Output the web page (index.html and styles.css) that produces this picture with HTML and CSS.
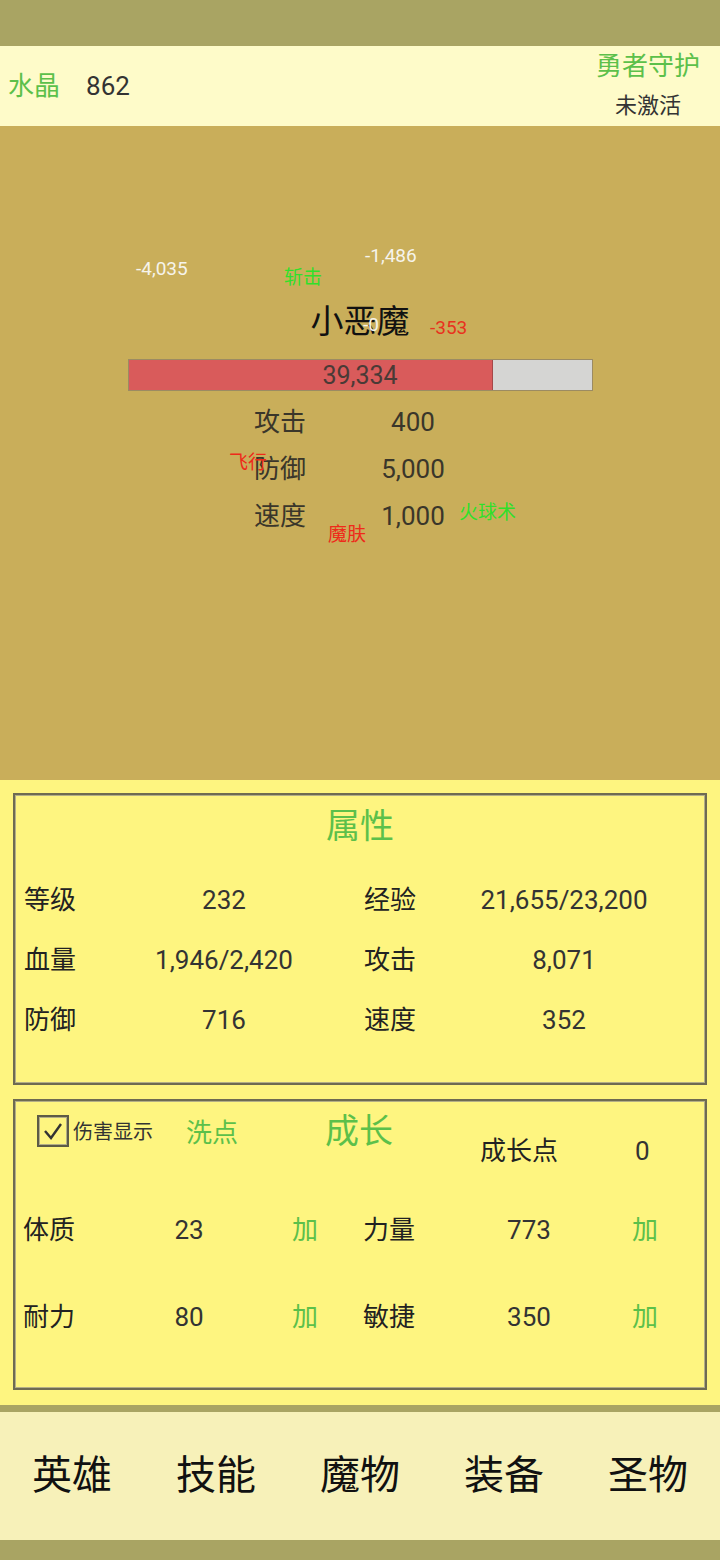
FILE: index.html
```html
<!DOCTYPE html>
<html lang="zh-CN">
<head>
  <meta charset="UTF-8" />
  <meta name="viewport" content="width=device-width, initial-scale=1.0"/>
  <title>勇者</title>
  <link rel="stylesheet" href="styles.css">
</head>
<body>
<div class="status-bar"></div>

<header class="top">
  <div class="crystal">
    <span class="crystal-label">水晶</span>
    <span class="crystal-num">862</span>
  </div>
  <div class="guard">
    <div class="guard-title">勇者守护</div>
    <div class="guard-state">未激活</div>
  </div>
</header>

<section class="battle">
  <div class="monster-name">小恶魔</div>
  <div class="hp-bar">
    <div class="hp-fill" style="width: 78.7%"></div>
    <span class="hp-text">39,334</span>
  </div>
  <div class="monster-stats">
    <span class="m-label">攻击</span><span class="m-value">400</span>
    <span class="m-label">防御</span><span class="m-value">5,000</span>
    <span class="m-label">速度</span><span class="m-value">1,000</span>
  </div>

  <!-- floating damage / skill popups -->
  <span class="pop dmg" style="left:136px; top:132px">-4,035</span>
  <span class="pop skill-green" style="left:284px; top:141px">斩击</span>
  <span class="pop dmg" style="left:365px; top:119px">-1,486</span>
  <span class="pop dmg" style="left:363px; top:188px">-0</span>
  <span class="pop dmg-red" style="left:430px; top:191px">-353</span>
  <span class="pop skill-red" style="left:229px; top:326px">飞行</span>
  <span class="pop skill-red" style="left:328px; top:398px">魔肤</span>
  <span class="pop skill-green" style="left:459px; top:376px">火球术</span>
</section>

<section class="panel">
  <div class="box attr-box">
    <div class="box-title">属性</div>
    <div class="attr-grid">
      <span class="label">等级</span><span class="value">232</span><span></span>
      <span class="label">经验</span><span class="value">21,655/23,200</span><span></span>
      <span class="label">血量</span><span class="value">1,946/2,420</span><span></span>
      <span class="label">攻击</span><span class="value">8,071</span><span></span>
      <span class="label">防御</span><span class="value">716</span><span></span>
      <span class="label">速度</span><span class="value">352</span><span></span>
    </div>
  </div>

  <div class="box grow-box">
    <div class="grow-top">
      <div class="check-area">
        <span class="checkbox">
          <svg width="28" height="28" viewBox="0 0 28 28"><polyline points="6,14 12,21 22,7" fill="none" stroke="#333" stroke-width="2.4"/></svg>
        </span>
        <span class="check-text">伤害显示</span>
      </div>
      <div class="wash">洗点</div>
      <div class="box-title grow-title">成长</div>
      <div class="points">
        <span class="points-label">成长点</span>
        <span class="points-num">0</span>
      </div>
    </div>
    <div class="grow-grid">
      <span class="label">体质</span><span class="value">23</span><span class="add">加</span>
      <span class="label">力量</span><span class="value">773</span><span class="add">加</span>
      <span class="label">耐力</span><span class="value">80</span><span class="add">加</span>
      <span class="label">敏捷</span><span class="value">350</span><span class="add">加</span>
    </div>
  </div>
</section>

<nav class="tabs">
  <a href="#">英雄</a>
  <a href="#">技能</a>
  <a href="#">魔物</a>
  <a href="#">装备</a>
  <a href="#">圣物</a>
</nav>
<div class="bottom-bar"></div>
</body>
</html>
```

FILE: styles.css
```css
body {
  margin: 0;
  font-family: Roboto, "Noto Sans CJK SC", sans-serif;
  color: #2e2e2a;
  background: #a9a463;
}
.status-bar {
  height: 46px;
  background: #a9a463;
}
.top {
  height: 80px;
  background: #fefbc9;
  display: flex;
  justify-content: space-between;
  align-items: center;
  padding: 0 20px 0 8px;
}
.crystal {
  display: flex;
  align-items: center;
  gap: 26px;
  font-size: 26px;
  line-height: 36px;
  margin-top: 0;
}
.crystal-label {
  color: #5cc04a;
}
.crystal-num {
  color: #333;
}
.guard {
  text-align: center;
}
.guard-title {
  color: #5cc04a;
  font-size: 26px;
  line-height: 40px;
}
.guard-state {
  color: #333;
  font-size: 22px;
  line-height: 40px;
}
.battle {
  position: relative;
  height: 654px;
  background: #c9ae5a;
  padding-top: 176px;
  box-sizing: border-box;
}
.monster-name {
  text-align: center;
  font-size: 33px;
  line-height: 40px;
  color: #111;
}
.hp-bar {
  position: relative;
  width: 463px;
  height: 30px;
  margin: 17px auto 0;
  background: #d5d5d3;
  border: 1px solid #9c8b62;
}
.hp-fill {
  height: 100%;
  background: #d95b5b;
  border-right: 1px solid #a54848;
  box-sizing: border-box;
}
.hp-text {
  position: absolute;
  left: 0;
  right: 0;
  top: 0;
  text-align: center;
  line-height: 32px;
  font-size: 25px;
  color: #4a3a36;
}
.monster-stats {
  display: grid;
  grid-template-columns: 100px 118px;
  margin: 8px 0 0 254px;
  font-size: 26px;
  line-height: 47px;
  color: #3a362a;
}
.m-value {
  text-align: center;
}
.pop {
  position: absolute;
  line-height: 22px;
  font-size: 19px;
  white-space: nowrap;
}
.dmg {
  color: #f6f4ec;
}
.dmg-red {
  color: #e8321e;
}
.skill-green {
  color: #2fe02a;
}
.skill-red {
  color: #ee2a1a;
}
.panel {
  background: #fef580;
  padding: 13px 13px 15px;
}
.box {
  border: 2px solid #6e6b52;
  box-shadow: inset 0 0 0 1px #b3ae86;
  padding: 1px;
}
.attr-box {
  height: 292px;
  box-sizing: border-box;
  padding: 11px 9px 0;
}
.box-title {
  text-align: center;
  color: #5cc04a;
  font-size: 34px;
  line-height: 40px;
}
.attr-grid {
  display: grid;
  grid-template-columns: 100px 200px 40px 100px 200px 40px;
  margin-top: 24px;
}
.label, .value, .add {
  font-size: 26px;
  line-height: 60px;
}
.label {
  color: #222;
}
.value {
  text-align: center;
  color: #333;
}
.grow-box {
  height: 291px;
  box-sizing: border-box;
  margin-top: 14px;
  padding: 10px 0 0;
}
.grow-top {
  display: flex;
  height: 60px;
}
.check-area {
  width: 171px;
  box-sizing: border-box;
  padding: 4px 0 0 22px;
  display: flex;
  align-items: flex-start;
}
.checkbox {
  width: 28px;
  height: 28px;
  border: 2px solid #5d5b46;
  box-shadow: inset 0 0 0 1px #b3ae86;
}
.check-text {
  margin-left: 4px;
  font-size: 20px;
  line-height: 34px;
  color: #333;
}
.wash {
  width: 100px;
  color: #5cc04a;
  font-size: 26px;
  line-height: 44px;
}
.grow-title {
  width: 146px;
}
.points {
  display: flex;
  padding-top: 20px;
  font-size: 26px;
  line-height: 40px;
  color: #222;
}
.points-label {
  width: 155px;
  padding-left: 48px;
}
.points-num {
  color: #333;
}
.grow-grid {
  display: grid;
  grid-template-columns: 100px 132px 100px 8px 100px 132px 100px;
  margin-top: 16px;
  padding-left: 8px;
}
.grow-grid .label:nth-child(4),
.grow-grid .label:nth-child(10) {
  grid-column: 5;
}
.grow-grid .label, .grow-grid .value, .grow-grid .add {
  line-height: 87px;
}
.add {
  text-align: center;
  color: #5cc04a;
}
.tabs {
  display: grid;
  grid-template-columns: repeat(5, 1fr);
  height: 128px;
  box-sizing: border-box;
  padding-bottom: 0;
  margin-top: 7px;
  background: #f7f1b9;
  align-items: center;
}
.tabs a {
  text-align: center;
  font-size: 40px;
  line-height: 50px;
  color: #111;
  text-decoration: none;
}
.bottom-bar {
  height: 20px;
  background: #a9a463;
}
```
